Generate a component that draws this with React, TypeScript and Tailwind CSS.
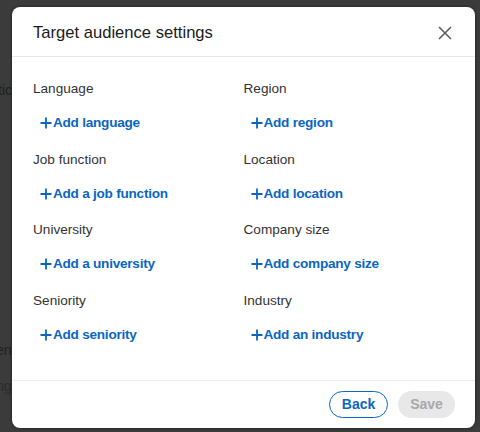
import React from 'react';

// Fields shown in the two-column grid, in reading order
const fields = [
  { label: 'Language', action: 'Add language' },
  { label: 'Region', action: 'Add region' },
  { label: 'Job function', action: 'Add a job function' },
  { label: 'Location', action: 'Add location' },
  { label: 'University', action: 'Add a university' },
  { label: 'Company size', action: 'Add company size' },
  { label: 'Seniority', action: 'Add seniority' },
  { label: 'Industry', action: 'Add an industry' },
];

const PlusIcon: React.FC = () => (
  <svg width="12" height="12" viewBox="0 0 12 12" className="shrink-0">
    <path d="M6 0.5v11M0.5 6h11" stroke="currentColor" strokeWidth="1.8" />
  </svg>
);

const App: React.FC = () => {
  return (
    <div
      className="relative w-[480px] h-[432px] overflow-hidden bg-[#3b3b3b]"
      style={{ fontFamily: '"Liberation Sans", Arial, sans-serif' }}
    >
      {/* dimmed page behind the modal */}
      <div className="flex flex-col pt-[80px] text-[14px] text-[#1f1f1f]">
        <div className="-ml-[2px] h-[20px] leading-[20px]">tic</div>
        <div className="mt-[240px] -ml-[4px] h-[20px] leading-[20px]">ene</div>
        <div className="mt-[16px] -ml-[4px] h-[20px] leading-[20px] text-[#2a2a2a]">ng</div>
      </div>

      {/* modal */}
      <div className="absolute left-[12px] top-[7px] w-[463px] h-[421px] flex flex-col rounded-[8px] bg-white shadow-[0_0_3px_rgba(0,0,0,0.6)]">
        <div className="flex items-center justify-between h-[50px] pl-[21px] pr-[18px] border-b border-[#e8e8e8]">
          <h2 className="text-[16.6px] leading-[24px] text-[#1b1b1b] pt-[2px]">Target audience settings</h2>
          <button className="flex items-center justify-center w-[24px] h-[24px] text-[#5e5e5e] mt-[2px]">
            <svg width="14" height="14" viewBox="0 0 14 14">
              <path d="M1 1l12 12M13 1L1 13" stroke="currentColor" strokeWidth="1.6" />
            </svg>
          </button>
        </div>

        <div className="flex-1 grid grid-cols-2 gap-y-[16.5px] px-[21px] pt-[22px] content-start">
          {fields.map(f => (
            <div key={f.label} className="flex flex-col">
              <div className="h-[20px] leading-[20px] text-[13.6px] text-[#333333]">{f.label}</div>
              <button className="mt-[14px] ml-[7px] flex items-center gap-[1px] h-[20px] text-[13.6px] tracking-[-0.25px] font-bold text-[#0a66c2]">
                <PlusIcon />
                <span className="leading-[20px]">{f.action}</span>
              </button>
            </div>
          ))}
        </div>

        <div className="flex items-center justify-end gap-[10px] h-[48px] pr-[20px] border-t border-[#ececec]">
          <button className="h-[27px] w-[59px] rounded-full border border-[#0a66c2] text-[14px] font-bold text-[#0a66c2]">
            Back
          </button>
          <button className="h-[27px] w-[57px] rounded-full bg-[#e8e8e8] text-[14px] font-bold text-[#a8a8a8]">
            Save
          </button>
        </div>
      </div>
    </div>
  );
};

export default App;
